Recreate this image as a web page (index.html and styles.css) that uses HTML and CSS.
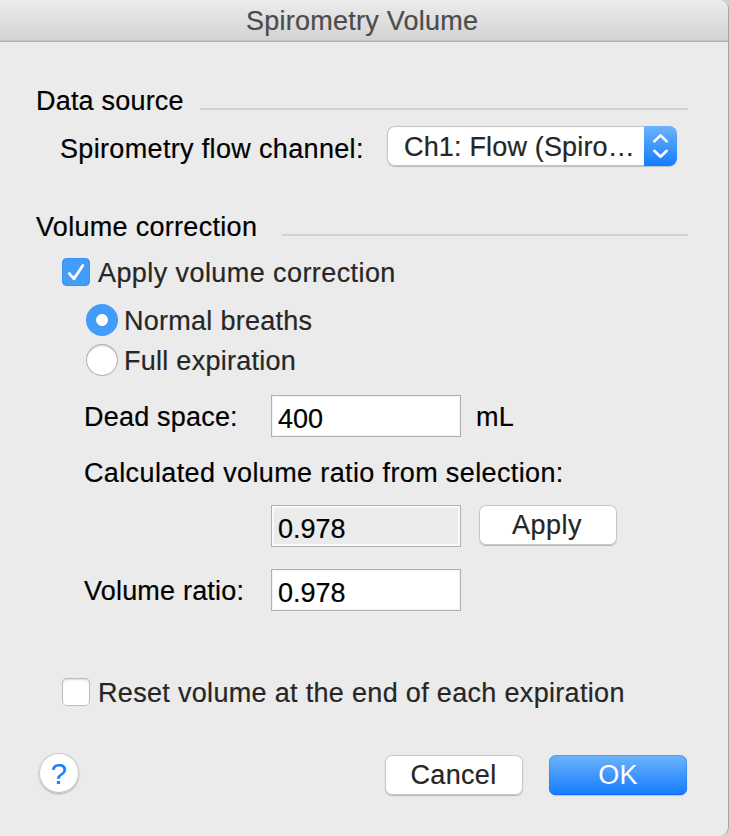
FILE: index.html
```html
<!DOCTYPE html>
<html lang="en">
<head>
<meta charset="utf-8">
<title>Spirometry Volume</title>
<link rel="stylesheet" href="styles.css">
</head>
<body>
<main class="dialog">
  <header class="titlebar"><h1>Spirometry Volume</h1></header>
  <form class="content">
    <div class="heading heading-source"><h2>Data source</h2><span class="rule"></span></div>
    <div class="channel">
      <label>Spirometry flow channel:</label>
      <div class="select">
        <span class="select-text">Ch1: Flow (Spiro…</span>
        <span class="stepper">
          <svg width="33" height="40" viewBox="0 0 33 40"><path d="M10.3 15.4 16.5 9.4 22.7 15.4M10.3 24.8 16.5 30.8 22.7 24.8"/></svg>
        </span>
      </div>
    </div>
    <div class="heading heading-volume"><h2>Volume correction</h2><span class="rule"></span></div>
    <label class="option option-apply">
      <span class="check checked"><svg width="28" height="28" viewBox="0 0 28 28"><path d="M7.3 15.6 12 20.8 20.8 7.4"/></svg></span>
      <span>Apply volume correction</span>
    </label>
    <label class="option radio-row"><span class="radio selected"></span><span>Normal breaths</span></label>
    <label class="option radio-row"><span class="radio"></span><span>Full expiration</span></label>
    <div class="field field-dead"><label>Dead space:</label><span class="input">400</span><span class="unit">mL</span></div>
    <div class="note">Calculated volume ratio from selection:</div>
    <div class="field field-calc"><label></label><span class="input readonly">0.978</span><span class="button apply">Apply</span></div>
    <div class="field field-ratio"><label>Volume ratio:</label><span class="input">0.978</span></div>
    <label class="option option-reset"><span class="check"></span><span>Reset volume at the end of each expiration</span></label>
    <footer class="actions">
      <span class="help">?</span>
      <span class="button cancel">Cancel</span>
      <span class="button primary">OK</span>
    </footer>
  </form>
</main>
</body>
</html>
```

FILE: styles.css
```css
* { box-sizing: border-box; }
body {
  margin: 0;
  background: #d2d2d2;
  color: #000;
  font: 27px/34px "Liberation Sans", Arial, sans-serif;
  letter-spacing: 0.34px;
  -webkit-text-stroke: 0.2px;
  white-space: nowrap;
}
h1, h2 { margin: 0; font: inherit; }
svg { display: block; fill: none; stroke: #fff; }
.dialog {
  width: 729px;
  height: 836px;
  overflow: hidden;
  background: #ebebeb;
  border-right: 1px solid #a4a4a4;
  border-radius: 0 9px 9px 0;
}
.titlebar {
  height: 42px;
  padding: 4px 0 0 246px;
  background: linear-gradient(#ececec, #d2d2d2);
  border-bottom: 1px solid #aeaeae;
  box-shadow: inset 0 -1px 0 #c4c4c4;
  color: #4c4c4c;
  letter-spacing: 0.24px;
}
.content { padding: 42px 0 0; }
.heading { display: flex; width: 688px; height: 32px; padding-left: 36px; }
.rule { width: 488px; height: 2px; margin: 24px 0 0 auto; background: #d2d2d2; }
.heading-source { letter-spacing: 0.2px; }
.heading-volume { margin-top: 44px; letter-spacing: 0.3px; }
.heading-volume .rule { width: 406px; }
.channel { display: flex; width: 677px; height: 40px; margin-top: 10px; padding-left: 60px; justify-content: space-between; }
.channel label { padding-top: 6px; }
.select {
  display: flex;
  justify-content: space-between;
  width: 290px;
  height: 40px;
  border-radius: 8px;
  background: #fff;
  box-shadow: inset 0 0 0 1px #c4c4c4, 0 1px 1px #bcbcbc;
  overflow: hidden;
  color: #262626;
  letter-spacing: 0.17px;
}
.select-text { padding: 4px 0 0 17px; }
.stepper { width: 33px; background: linear-gradient(#6db3fa, #147cff); }
.stepper path { stroke-width: 2.6; stroke-linecap: round; stroke-linejoin: round; }
.option { display: flex; align-items: center; gap: 8px; height: 32px; padding-left: 62px; color: #262626; }
.option > span:last-child { padding-top: 2px; }
.option-apply { margin-top: 14px; letter-spacing: 0.42px; }
.radio-row { gap: 6px; padding-left: 86px; margin-top: 16px; letter-spacing: 0.27px; }
.radio-row + .radio-row { margin-top: 8px; }
.check {
  width: 28px;
  height: 28px;
  border-radius: 5px;
  background: #fff;
  box-shadow: inset 0 0 0 1px #bdbdbd, inset 0 2px 2px #d9d9d9;
}
.checked { background: #429cfa; box-shadow: inset 0 0 0 1px #3994f5; }
.checked path { stroke-width: 2.8; stroke-linecap: round; stroke-linejoin: round; }
.radio {
  width: 32px;
  height: 32px;
  border-radius: 50%;
  background: #fff;
  box-shadow: inset 0 0 0 1px #b2b2b2, inset 0 2px 2px #d0d0d0;
}
.selected { background: radial-gradient(circle, #fff 5.5px, #429cfa 6.3px); box-shadow: none; }
.field { display: flex; padding-left: 84px; height: 42px; }
.field label { width: 187px; padding-top: 5px; letter-spacing: 0.2px; }
.input {
  width: 190px;
  height: 42px;
  padding: 6px 0 0 6px;
  border: 1px solid #b1b1b1;
  background: #fff;
  box-shadow: inset 0 0 0 1px #f3f3f3;
  letter-spacing: 0;
}
.readonly { background: #ebebeb; box-shadow: inset 0 0 0 2px #f9f9f9; }
.field-dead { margin-top: 19px; }
.unit { padding: 5px 0 0 15px; }
.note { height: 32px; margin-top: 19px; padding-left: 84px; letter-spacing: 0.37px; }
.field-calc { margin-top: 17px; }
.field-ratio { margin-top: 22px; }
.button {
  width: 138px;
  height: 40px;
  padding-top: 3px;
  border-radius: 7px;
  background: #fff;
  box-shadow: inset 0 0 0 1px #c6c6c6, 0 1px 1px #b5b5b5;
  color: #262626;
  text-align: center;
}
.apply { margin-left: 18px; padding-right: 2px; letter-spacing: 0.5px; }
.option-reset { margin-top: 65px; letter-spacing: 0.32px; }
.actions { display: flex; width: 687px; margin-top: 45px; padding-left: 39px; }
.help {
  width: 40px;
  height: 40px;
  padding-top: 4px;
  border-radius: 50%;
  background: #fff;
  box-shadow: inset 0 0 0 1px #c8c8c8, 0 1px 2px #a8a8a8;
  color: #147cff;
  font-size: 29px;
  text-align: center;
}
.cancel { margin: 2px 26px 0 auto; padding-right: 1px; }
.primary {
  margin-top: 2px;
  background: linear-gradient(#6db3fa, #147cff);
  box-shadow: inset 0 0 0 1px rgba(20, 105, 240, .3), inset 0 -1px 0 #116bff, 0 1px 1px #c4c4d0;
  color: #fff;
  -webkit-text-stroke: 0;
}
```
